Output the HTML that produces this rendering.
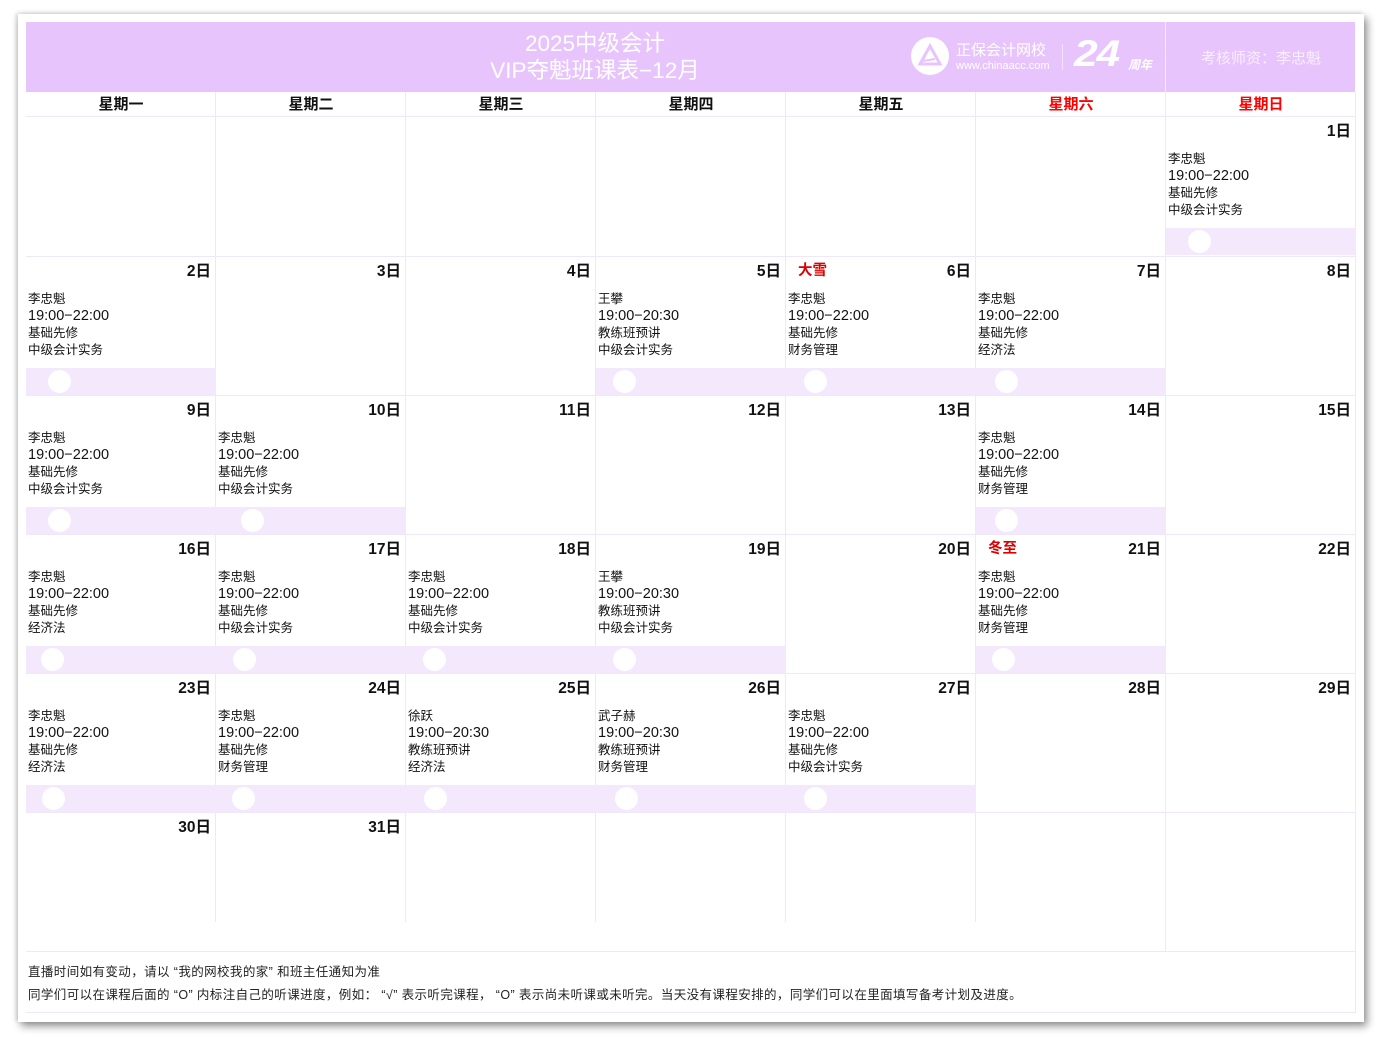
<!DOCTYPE html>
<html><head><meta charset="utf-8"><style>
*{margin:0;padding:0;box-sizing:border-box}
body{width:1381px;height:1038px;background:#fff;position:relative;overflow:hidden;font-family:"Liberation Sans","Noto Sans CJK SC",sans-serif;color:#111}
.card{position:absolute;left:18px;top:14px;width:1346px;height:1008px;background:#fff;box-shadow:3px 4px 8px rgba(0,0,0,.45),-2px -1px 4px rgba(0,0,0,.15)}
.hdr{position:absolute;left:26px;top:22px;width:1329px;height:70px;background:#e8c4fc}
.title{position:absolute;left:420px;width:350px;text-align:center;top:30px;color:#fff;font-size:22.5px;line-height:27px}
.wd{position:absolute;top:92px;height:24px;width:190px;text-align:center;font-size:15px;font-weight:bold;line-height:26px}
.vl{position:absolute;width:1px;background:#f0e8f8}
.hl{position:absolute;height:1px;background:#f0e8f8}
.cell{position:absolute;width:190px}
.d{position:absolute;right:5px;top:3px;font-size:15.5px;font-weight:bold}
.hol{position:absolute;left:12px;top:3px;font-size:14.5px;font-weight:bold;color:#d00}
.t{position:absolute;left:2px;top:35px;font-size:12.5px;line-height:17px;color:#111}
.t .tm{font-size:14.5px}
.st{position:absolute;height:27px;background:#f4e8fd;top:112px}
.c{position:absolute;top:2px;width:23px;height:23px;border-radius:50%;background:#fff}
.ft{position:absolute;left:28px;font-size:12.5px;color:#222;letter-spacing:0.4px}
</style></head><body>
<div class="card"></div>
<div class="hdr"></div>
<div class="title">2025中级会计<br>VIP夺魁班课表−12月</div>
<div style="position:absolute;left:911px;top:37px;width:38px;height:38px;border-radius:50%;background:#fff"></div>
<svg style="position:absolute;left:911px;top:37px" width="38" height="38"><path d="M19 9 L9 27 L29 27 Z" fill="none" stroke="#e8c4fc" stroke-width="3"/><path d="M15 15 L12 24 L24 22" fill="none" stroke="#e8c4fc" stroke-width="2"/></svg>
<div style="position:absolute;left:956px;top:39px;color:#fff;font-size:15px">正保会计网校</div>
<div style="position:absolute;left:956px;top:60px;color:#fff;font-size:11px">www.chinaacc.com</div>
<div style="position:absolute;left:1062px;top:44px;width:1px;height:26px;background:#f3e0fd"></div>
<div style="position:absolute;left:1074px;top:33px;color:#fff;font-size:37px;font-weight:900;font-style:italic;letter-spacing:-1px;transform:scaleX(1.15);transform-origin:left">24</div>
<div style="position:absolute;left:1128px;top:56px;color:#fff;font-size:12px;font-style:italic;font-weight:bold">周年</div>
<div style="position:absolute;left:1165px;top:22px;width:1px;height:70px;background:#f5ecfd"></div>
<div style="position:absolute;left:1166px;width:190px;top:47px;text-align:center;color:#f8eeff;font-size:15px">考核师资：李忠魁</div>
<div class="wd" style="left:26px">星期一</div><div class="wd" style="left:216px">星期二</div><div class="wd" style="left:406px">星期三</div><div class="wd" style="left:596px">星期四</div><div class="wd" style="left:786px">星期五</div><div class="wd" style="left:976px;color:#f00">星期六</div><div class="wd" style="left:1166px;color:#f00">星期日</div>
<div class="hl" style="left:26px;top:116px;width:1329px"></div>
<div class="vl" style="left:215px;top:92px;height:830px"></div>
<div class="vl" style="left:405px;top:92px;height:830px"></div>
<div class="vl" style="left:595px;top:92px;height:830px"></div>
<div class="vl" style="left:785px;top:92px;height:830px"></div>
<div class="vl" style="left:975px;top:92px;height:830px"></div>
<div class="vl" style="left:1165px;top:92px;height:859px"></div>
<div class="vl" style="left:1355px;top:92px;height:921px"></div>
<div class="hl" style="left:26px;top:256px;width:1329px"></div>
<div class="hl" style="left:26px;top:395px;width:1329px"></div>
<div class="hl" style="left:26px;top:534px;width:1329px"></div>
<div class="hl" style="left:26px;top:673px;width:1329px"></div>
<div class="hl" style="left:26px;top:812px;width:1329px"></div>
<div class="hl" style="left:26px;top:951px;width:1329px"></div>
<div class="hl" style="left:26px;top:1012px;width:1329px"></div>

<div class="cell" style="left:1166px;top:116px"><div class="d">1日</div><div class="t">李忠魁<br><span class="tm">19:00−22:00</span><br>基础先修<br>中级会计实务</div></div>
<div class="st" style="left:1166px;top:228px;width:190px"><div class="c" style="left:22px"></div></div>

<div class="cell" style="left:26px;top:256px"><div class="d">2日</div><div class="t">李忠魁<br><span class="tm">19:00−22:00</span><br>基础先修<br>中级会计实务</div></div>
<div class="cell" style="left:216px;top:256px"><div class="d">3日</div></div>
<div class="cell" style="left:406px;top:256px"><div class="d">4日</div></div>
<div class="cell" style="left:596px;top:256px"><div class="d">5日</div><div class="t">王攀<br><span class="tm">19:00−20:30</span><br>教练班预讲<br>中级会计实务</div></div>
<div class="cell" style="left:786px;top:256px"><div class="hol">大雪</div><div class="d">6日</div><div class="t">李忠魁<br><span class="tm">19:00−22:00</span><br>基础先修<br>财务管理</div></div>
<div class="cell" style="left:976px;top:256px"><div class="d">7日</div><div class="t">李忠魁<br><span class="tm">19:00−22:00</span><br>基础先修<br>经济法</div></div>
<div class="cell" style="left:1166px;top:256px"><div class="d">8日</div></div>
<div class="st" style="left:26px;top:368px;width:190px"><div class="c" style="left:22px"></div></div>
<div class="st" style="left:596px;top:368px;width:570px"><div class="c" style="left:17px"></div><div class="c" style="left:208px"></div><div class="c" style="left:399px"></div></div>

<div class="cell" style="left:26px;top:395px"><div class="d">9日</div><div class="t">李忠魁<br><span class="tm">19:00−22:00</span><br>基础先修<br>中级会计实务</div></div>
<div class="cell" style="left:216px;top:395px"><div class="d">10日</div><div class="t">李忠魁<br><span class="tm">19:00−22:00</span><br>基础先修<br>中级会计实务</div></div>
<div class="cell" style="left:406px;top:395px"><div class="d">11日</div></div>
<div class="cell" style="left:596px;top:395px"><div class="d">12日</div></div>
<div class="cell" style="left:786px;top:395px"><div class="d">13日</div></div>
<div class="cell" style="left:976px;top:395px"><div class="d">14日</div><div class="t">李忠魁<br><span class="tm">19:00−22:00</span><br>基础先修<br>财务管理</div></div>
<div class="cell" style="left:1166px;top:395px"><div class="d">15日</div></div>
<div class="st" style="left:26px;top:507px;width:380px"><div class="c" style="left:22px"></div><div class="c" style="left:215px"></div></div>
<div class="st" style="left:976px;top:507px;width:190px"><div class="c" style="left:19px"></div></div>

<div class="cell" style="left:26px;top:534px"><div class="d">16日</div><div class="t">李忠魁<br><span class="tm">19:00−22:00</span><br>基础先修<br>经济法</div></div>
<div class="cell" style="left:216px;top:534px"><div class="d">17日</div><div class="t">李忠魁<br><span class="tm">19:00−22:00</span><br>基础先修<br>中级会计实务</div></div>
<div class="cell" style="left:406px;top:534px"><div class="d">18日</div><div class="t">李忠魁<br><span class="tm">19:00−22:00</span><br>基础先修<br>中级会计实务</div></div>
<div class="cell" style="left:596px;top:534px"><div class="d">19日</div><div class="t">王攀<br><span class="tm">19:00−20:30</span><br>教练班预讲<br>中级会计实务</div></div>
<div class="cell" style="left:786px;top:534px"><div class="d">20日</div></div>
<div class="cell" style="left:976px;top:534px"><div class="hol">冬至</div><div class="d">21日</div><div class="t">李忠魁<br><span class="tm">19:00−22:00</span><br>基础先修<br>财务管理</div></div>
<div class="cell" style="left:1166px;top:534px"><div class="d">22日</div></div>
<div class="st" style="left:26px;top:646px;width:760px"><div class="c" style="left:15px"></div><div class="c" style="left:207px"></div><div class="c" style="left:397px"></div><div class="c" style="left:587px"></div></div>
<div class="st" style="left:976px;top:646px;width:190px"><div class="c" style="left:16px"></div></div>

<div class="cell" style="left:26px;top:673px"><div class="d">23日</div><div class="t">李忠魁<br><span class="tm">19:00−22:00</span><br>基础先修<br>经济法</div></div>
<div class="cell" style="left:216px;top:673px"><div class="d">24日</div><div class="t">李忠魁<br><span class="tm">19:00−22:00</span><br>基础先修<br>财务管理</div></div>
<div class="cell" style="left:406px;top:673px"><div class="d">25日</div><div class="t">徐跃<br><span class="tm">19:00−20:30</span><br>教练班预讲<br>经济法</div></div>
<div class="cell" style="left:596px;top:673px"><div class="d">26日</div><div class="t">武子赫<br><span class="tm">19:00−20:30</span><br>教练班预讲<br>财务管理</div></div>
<div class="cell" style="left:786px;top:673px"><div class="d">27日</div><div class="t">李忠魁<br><span class="tm">19:00−22:00</span><br>基础先修<br>中级会计实务</div></div>
<div class="cell" style="left:976px;top:673px"><div class="d">28日</div></div>
<div class="cell" style="left:1166px;top:673px"><div class="d">29日</div></div>
<div class="st" style="left:26px;top:785px;width:950px"><div class="c" style="left:16px"></div><div class="c" style="left:206px"></div><div class="c" style="left:398px"></div><div class="c" style="left:589px"></div><div class="c" style="left:778px"></div></div>

<div class="cell" style="left:26px;top:812px"><div class="d">30日</div></div>
<div class="cell" style="left:216px;top:812px"><div class="d">31日</div></div>

<div class="ft" style="top:961px">直播时间如有变动，请以 “我的网校我的家” 和班主任通知为准</div>
<div class="ft" style="top:984px">同学们可以在课程后面的 “O” 内标注自己的听课进度，例如： “√” 表示听完课程， “O” 表示尚未听课或未听完。当天没有课程安排的，同学们可以在里面填写备考计划及进度。</div>
</body></html>
